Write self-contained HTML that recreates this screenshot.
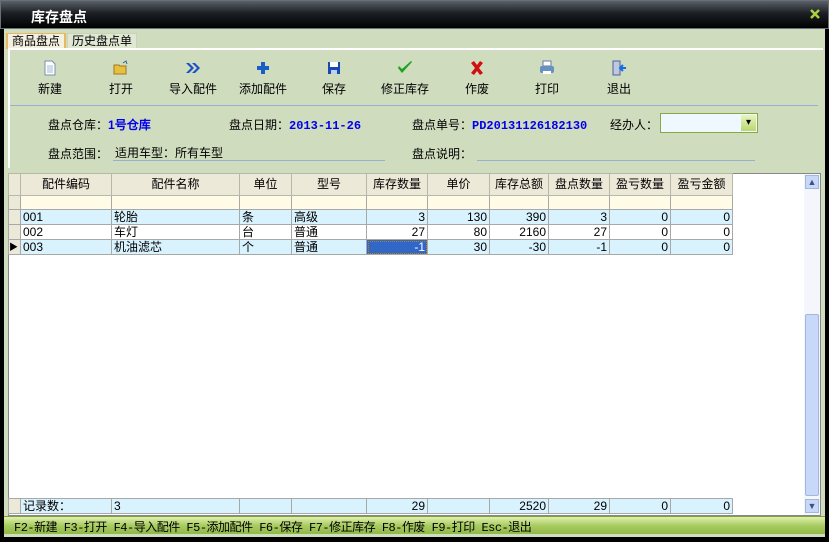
<!DOCTYPE html>
<html><head><meta charset="utf-8"><style>
*{margin:0;padding:0;box-sizing:border-box}
body{width:829px;height:542px;background:#000;font-family:"Liberation Sans","WenQuanYi Zen Hei","Noto Sans CJK SC",sans-serif;font-size:12px;position:relative;overflow:hidden;color:#000}
.a{position:absolute}
#title{left:0;top:0;width:829px;height:29px;background:linear-gradient(#5a6068,#1c2024 45%,#000);border:1px solid #6a7078}
#title span{position:absolute;left:30px;top:6px;color:#fff;font-weight:bold;font-size:14px}
#win{left:4px;top:29px;width:821px;height:508px;background:#d0dcbe}
.tab{top:33px;height:16px;font-size:12px;line-height:15px;padding:0 4px;border:1px solid #c8d4b8;border-bottom:none;background:#e0e8d4}
#panel{left:8px;top:48px;width:815px;height:120px;border-top:2px solid #fff;border-left:2px solid #fff}
.tb{top:60px;width:60px;text-align:center;font-size:12px}
.tb svg{display:block;margin:0 auto 4px;width:16px;height:16px}
.lbl{font-size:12px}
.blue{color:#0000ee;font-weight:bold;font-family:"Liberation Mono","WenQuanYi Zen Hei",monospace}
table{border-collapse:collapse;table-layout:fixed}
td{border:1px solid #a8a8a8;height:15px;padding:0 2px;font-size:12px;line-height:13px;white-space:nowrap;overflow:hidden}
.h td{background:#ece9d8;height:22px;text-align:center;border-color:#b8b8a8}
.f td{background:#fffbe6;height:14px}
.r1 td{background:#d8f2fe}
.r2 td{background:#fff}
.n{text-align:right}
td.rh{background:#ece9d8!important;padding:0}
</style></head><body>
<div id="title" class="a"><span>库存盘点</span><svg class="a" style="right:8px;top:8px" width="10" height="10"><path d="M1 1L9 9M9 1L1 9" stroke="#a8d040" stroke-width="2.5"/></svg></div>
<div id="win" class="a"></div>
<div class="a tab" style="left:6px;background:#f4f0e0;border-color:#e8b860;border-width:1px 2px 0 2px">商品盘点</div>
<div class="a tab" style="left:67px">历史盘点单</div>
<div id="panel" class="a"></div>
<div class="a tb" style="left:20px"><svg viewBox="0 0 16 16"><path d="M3 1h7l3 3v11H3z" fill="#fff" stroke="#7890b0"/><path d="M5 6h6M5 8h6M5 10h6M5 12h6" stroke="#a0b8d0"/></svg>新建</div>
<div class="a tb" style="left:91px"><svg viewBox="0 0 16 16"><path d="M1 5h5l1 1h6v8H1z" fill="#e8c040" stroke="#a07820"/><path d="M10 3l3-2 1 3" stroke="#3060a0" fill="none"/></svg>打开</div>
<div class="a tb" style="left:163px"><svg viewBox="0 0 16 16"><path d="M1 3l5 5-5 5h3l5-5-5-5zM7 3l5 5-5 5h3l5-5-5-5z" fill="#1850c8"/></svg>导入配件</div>
<div class="a tb" style="left:233px"><svg viewBox="0 0 16 16"><path d="M6 2h4v4h4v4h-4v4H6v-4H2V6h4z" fill="#1860c8"/></svg>添加配件</div>
<div class="a tb" style="left:304px"><svg viewBox="0 0 16 16"><rect x="2" y="2" width="12" height="12" fill="#1848b0"/><rect x="4" y="2" width="8" height="5" fill="#fff"/><rect x="5" y="10" width="6" height="4" fill="#c0d0f0"/></svg>保存</div>
<div class="a tb" style="left:375px"><svg viewBox="0 0 16 16"><path d="M1 8l4 5 10-11-1-1-9 8-3-3z" fill="#20a020"/></svg>修正库存</div>
<div class="a tb" style="left:447px"><svg viewBox="0 0 16 16"><path d="M2 3l3-2 3 4 3-4 3 2-4 5 4 5-3 2-3-4-3 4-3-2 4-5z" fill="#d01010"/></svg>作废</div>
<div class="a tb" style="left:517px"><svg viewBox="0 0 16 16"><rect x="4" y="1" width="8" height="5" fill="#fff" stroke="#6080a0"/><rect x="1" y="6" width="14" height="7" rx="2" fill="#6890c0"/><rect x="4" y="11" width="8" height="3" fill="#fff"/></svg>打印</div>
<div class="a tb" style="left:589px"><svg viewBox="0 0 16 16"><rect x="2" y="1" width="7" height="14" fill="#c0c8e0" stroke="#5060a0"/><path d="M9 8h6M12 5l-3 3 3 3" stroke="#1070e0" stroke-width="2" fill="none"/></svg>退出</div>
<div class="a" style="left:10px;top:105px;width:808px;height:1px;background:#98b0d0"></div>
<div class="a lbl" style="left:48px;top:116px">盘点仓库：<span class="blue" style="font-family:'WenQuanYi Zen Hei',sans-serif">1号仓库</span></div>
<div class="a lbl" style="left:229px;top:116px">盘点日期：<span class="blue">2013-11-26</span></div>
<div class="a lbl" style="left:412px;top:116px">盘点单号：<span class="blue">PD20131126182130</span></div>
<div class="a lbl" style="left:610px;top:116px">经办人：</div>
<div class="a" style="left:660px;top:113px;width:98px;height:20px;border:1px solid #88a840;background:#f0f8ff"><div class="a" style="right:1px;top:1px;width:15px;height:16px;background:linear-gradient(#e8f4c0,#b8d870);text-align:center;font-size:10px;line-height:16px">▾</div></div>
<div class="a lbl" style="left:48px;top:145px">盘点范围：</div>
<div class="a lbl" style="left:115px;top:144px">适用车型：所有车型</div>
<div class="a" style="left:113px;top:160px;width:272px;height:1px;background:#98b0d0"></div>
<div class="a lbl" style="left:412px;top:145px">盘点说明：</div>
<div class="a" style="left:477px;top:160px;width:278px;height:1px;background:#98b0d0"></div>
<div class="a" style="left:8px;top:173px;width:813px;height:343px;background:#fff;border:1px solid #888"></div>
<table class="a" style="left:8px;top:173px">
<colgroup><col width="12"><col width="91"><col width="128"><col width="52"><col width="75"><col width="61"><col width="62"><col width="59"><col width="61"><col width="61"><col width="62"></colgroup>
<tr class="h"><td class="rh"></td><td>配件编码</td><td>配件名称</td><td>单位</td><td>型号</td><td>库存数量</td><td>单价</td><td>库存总额</td><td>盘点数量</td><td>盈亏数量</td><td>盈亏金额</td></tr>
<tr class="f"><td class="rh"></td><td></td><td></td><td></td><td></td><td></td><td></td><td></td><td></td><td></td><td></td></tr>
<tr class="r1"><td class="rh"></td><td>001</td><td>轮胎</td><td>条</td><td>高级</td><td class="n">3</td><td class="n">130</td><td class="n">390</td><td class="n">3</td><td class="n">0</td><td class="n">0</td></tr>
<tr class="r2"><td class="rh"></td><td>002</td><td>车灯</td><td>台</td><td>普通</td><td class="n">27</td><td class="n">80</td><td class="n">2160</td><td class="n">27</td><td class="n">0</td><td class="n">0</td></tr>
<tr class="r1"><td class="rh" style="font-size:9px">▶</td><td>003</td><td>机油滤芯</td><td>个</td><td>普通</td><td class="n" style="background:#3168c8;color:#fff;outline:1px dotted #c08000;outline-offset:-2px">-1</td><td class="n">30</td><td class="n">-30</td><td class="n">-1</td><td class="n">0</td><td class="n">0</td></tr>
</table>
<table class="a" style="left:8px;top:498px">
<colgroup><col width="12"><col width="91"><col width="128"><col width="52"><col width="75"><col width="61"><col width="62"><col width="59"><col width="61"><col width="61"><col width="62"></colgroup>
<tr class="r1"><td class="rh"></td><td>记录数：</td><td>3</td><td></td><td></td><td class="n">29</td><td></td><td class="n">2520</td><td class="n">29</td><td class="n">0</td><td class="n">0</td></tr>
</table>
<div class="a" style="left:804px;top:174px;width:16px;height:341px;background:#f4f6fb"></div>
<div class="a" style="left:805px;top:175px;width:14px;height:14px;background:#c8d8f8;border:1px solid #a0b8e0;font-size:9px;text-align:center;line-height:12px;color:#405080">▲</div>
<div class="a" style="left:805px;top:314px;width:14px;height:182px;background:#c8d8f8;border:1px solid #a0b8e0;border-radius:2px"></div>
<div class="a" style="left:805px;top:499px;width:14px;height:14px;background:#c8d8f8;border:1px solid #a0b8e0;font-size:9px;text-align:center;line-height:12px;color:#405080">▼</div>
<div class="a" style="left:4px;top:516px;width:821px;height:18px;background:linear-gradient(#e0f0b0,#a8cc60 50%,#90b848);border-top:1px solid #80a040"></div>
<div class="a" style="left:14px;top:518px;font-size:12px;font-family:'Liberation Mono','WenQuanYi Zen Hei',monospace;letter-spacing:-0.5px">F2-新建 F3-打开 F4-导入配件 F5-添加配件 F6-保存 F7-修正库存 F8-作废 F9-打印 Esc-退出</div>
</body></html>
